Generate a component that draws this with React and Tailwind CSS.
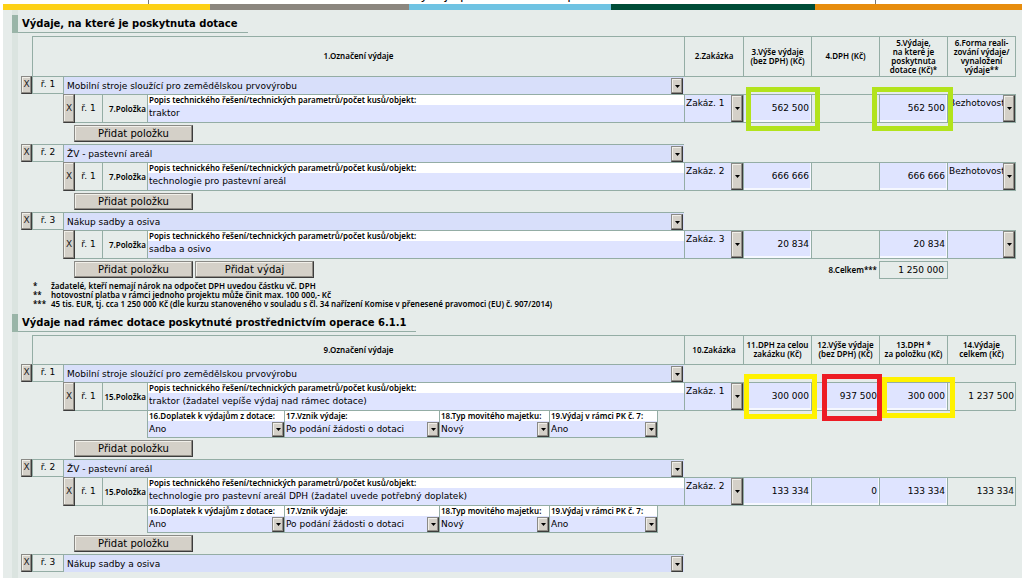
import { useId } from "react";

const line = "border-[#94ada5]";
const body = "font-['DejaVu_Sans',sans-serif] text-[9px]";
const small = "font-['Noto_Sans',sans-serif] text-[8px] font-semibold";
const bevel =
  "border border-t-[#8a8a86] border-l-[#8a8a86] border-r-[#3c3c3c] border-b-[#3c3c3c] bg-[#d4d0c8] shadow-[inset_-1px_-1px_0_#918d86,inset_1px_1px_0_#f1efe9]";

const grants = [
  { name: "Mobilní stroje sloužící pro zemědělskou prvovýrobu", item: "traktor", amount: "562 500", form: "Bezhotovostní", mark: true },
  { name: "ŽV - pastevní areál", item: "technologie pro pastevní areál", amount: "666 666", form: "Bezhotovostní" },
  { name: "Nákup sadby a osiva", item: "sadba a osivo", amount: "20 834", form: "" },
];

const extras = [
  {
    name: "Mobilní stroje sloužící pro zemědělskou prvovýrobu",
    item: "traktor (žadatel vepíše výdaj nad rámec dotace)",
    vat: "300 000", net: "937 500", itemVat: "300 000", total: "1 237 500", mark: true,
  },
  {
    name: "ŽV - pastevní areál",
    item: "technologie pro pastevní areál DPH (žadatel uvede potřebný doplatek)",
    vat: "133 334", net: "0", itemVat: "133 334", total: "133 334",
  },
];

const details = [
  { label: "16.Doplatek k výdajům z dotace:", value: "Ano", width: "w-[137px]" },
  { label: "17.Vznik výdaje:", value: "Po podání žádosti o dotaci", width: "w-[155px]" },
  { label: "18.Typ movitého majetku:", value: "Nový", width: "w-[110px]" },
  { label: "19.Výdaj v rámci PK č. 7:", value: "Ano", width: "w-[108px]" },
];

function Arrow() {
  return (
    <span aria-hidden="true" className={`flex w-3 shrink-0 items-center justify-center ${bevel}`}>
      <svg width="5" height="3" viewBox="0 0 5 3"><path d="M0 0h5L2.5 3z" fill="#000" /></svg>
    </span>
  );
}

function Choice({ id, label, value, className = "" }) {
  return (
    <select
      id={id}
      aria-label={id ? undefined : label}
      defaultValue={value}
      className={`block w-full min-w-0 flex-1 appearance-none overflow-hidden bg-transparent text-black outline-none ${body} ${className}`}
    >
      <option value={value}>{value}</option>
    </select>
  );
}

function RemoveButton({ label }) {
  return (
    <button type="button" aria-label={label} className={`flex h-full w-full items-center justify-center text-[#222] ${bevel} ${body}`}>
      X
    </button>
  );
}

function AddButton({ children }) {
  return (
    <button
      type="button"
      className={`h-[17px] w-[119px] font-['DejaVu_Sans',sans-serif] text-[10px] leading-[14px] font-medium text-black ${bevel}`}
    >
      {children}
    </button>
  );
}

function Columns() {
  return (
    <colgroup>
      <col className="w-[11px]" />
      <col className="w-[31px]" />
      <col className="w-[12px]" />
      <col className="w-[27px]" />
      <col className="w-[45px]" />
      <col />
      <col className="w-[59px]" />
      <col className="w-[68px]" />
      <col className="w-[68px]" />
      <col className="w-[68px]" />
      <col className="w-[69px]" />
    </colgroup>
  );
}

function HeaderRow({ titles, height }) {
  return (
    <thead>
      <tr className={height}>
        <td></td>
        {titles.map((lines, i) => (
          <th
            key={i}
            scope="col"
            colSpan={i === 0 ? 5 : 1}
            className={`border-t border-l p-0 pb-0.5 text-center align-middle leading-[9px] whitespace-nowrap last:border-r ${line} ${small}`}
          >
            {lines.map((text) => (
              <span key={text} className="block">{text}</span>
            ))}
          </th>
        ))}
      </tr>
    </thead>
  );
}

function ExpenseRow({ index, name }) {
  return (
    <tr className="h-[18px]">
      <td className="h-[18px] p-0"><RemoveButton label={`Odebrat výdaj ${index}`} /></td>
      <td className={`border-t border-b border-l p-0 text-center ${line} ${body}`}>ř. {index}</td>
      <td colSpan={4} className={`border-t border-l bg-[#d8dffa] p-0 ${line}`}>
        <div className="flex h-[17px] pt-px pr-px">
          <Choice label={`Označení výdaje ${index}`} value={name} className="pt-0.5 pl-[3px]" />
          <Arrow />
        </div>
      </td>
      <td colSpan={5} className={index === 1 ? `border-t p-0 ${line}` : "p-0"}></td>
    </tr>
  );
}

function Amount({ label, value, mark }) {
  return (
    <td className={`relative border-t border-b border-l p-0 ${line}`}>
      <input
        aria-label={label}
        defaultValue={value}
        className={`block h-[27px] w-full border-r border-b-2 border-[#f6f8ff] bg-[#dfe4ff] pr-px text-right text-black outline-none ${body}`}
      />
      {mark && <span aria-hidden="true" className={`pointer-events-none absolute z-10 border-[5px] ${mark}`}></span>}
    </td>
  );
}

function Plain({ value }) {
  return (
    <td className={`border-t border-b border-l p-0 pr-px text-right last:border-r ${line} ${body}`}>{value}</td>
  );
}

function ItemCells({ prefix, order, item }) {
  const id = useId();
  return (
    <>
      <td colSpan={2} className="p-0"></td>
      <td className="h-[29px] p-0"><RemoveButton label="Odebrat položku" /></td>
      <td className={`border-t border-b p-0 text-center ${line} ${body}`}>ř. 1</td>
      <td className={`border-t border-b border-l p-0 pr-px text-right whitespace-nowrap ${line} ${small}`}>
        {prefix}.Položka
      </td>
      <td className={`border-t border-b border-l bg-[#dfe4ff] p-0 ${line}`}>
        <label htmlFor={id} className={`block h-[10px] bg-white pl-px leading-[10px] ${small}`}>
          Popis technického řešení/technických parametrů/počet kusů/objekt:
        </label>
        <input id={id} defaultValue={item} className={`block h-[17px] w-full bg-transparent pb-0.5 pl-px text-black outline-none ${body}`} />
      </td>
      <td className={`border-t border-b border-l bg-[#dfe4ff] p-0 ${line}`}>
        <div className="flex h-[27px]">
          <Choice label="Zakázka" value={`Zakáz. ${order}`} className="h-[17px] pl-px" />
          <Arrow />
        </div>
      </td>
    </>
  );
}

function ButtonRow({ children, after }) {
  return (
    <tr className="h-[21px]">
      <td colSpan={2} className="p-0"></td>
      <td colSpan={4} className="p-0 pl-[11px] align-middle">
        <div className="flex gap-0.5">{children}</div>
      </td>
      {after || <td colSpan={5} className="p-0"></td>}
    </tr>
  );
}

function Detail({ label, value, width }) {
  const id = useId();
  return (
    <div className={`border-r border-b bg-[#dfe4ff] ${line} ${width}`}>
      <label htmlFor={id} className={`block h-[10px] bg-white pl-px leading-[10px] whitespace-nowrap ${small}`}>{label}</label>
      <div className="flex h-4 pt-px">
        <Choice id={id} value={value} className="pl-px" />
        <Arrow />
      </div>
    </div>
  );
}

function SectionTitle({ children }) {
  return (
    <div className="-ml-1.5 flex border-l-[6px] border-[#9ab5a8]">
      <h2 className="h-[18px] border-b border-[#94ada5] pr-[10px] pl-1 font-['DejaVu_Sans',sans-serif] text-[10px] leading-[18px] font-bold">
        {children}
      </h2>
    </div>
  );
}

export default function App() {
  const tableClass = "w-full table-fixed border-separate border-spacing-0";
  return (
    <div className="min-h-screen bg-white pr-0.5 pl-[3px] text-black">
      <div className="flex h-1 overflow-hidden font-['DejaVu_Sans',sans-serif] text-[13px] leading-[18px]">
        <div className="w-[146px] border-r border-[#777]"></div>
        <div className="flex flex-1 items-end justify-center">Výdaje podle zadání a operace</div>
        <div className="w-[147px] border-l border-[#777]"></div>
      </div>
      <div className="flex h-1.5">
        <div className="flex-[207] bg-[#fdd116]"></div>
        <div className="flex-[199] bg-[#8c877f]"></div>
        <div className="flex-[202] bg-[#6fc3e3]"></div>
        <div className="flex-[204] bg-[#004d38]"></div>
        <div className="flex-[207] bg-[#e78d0e]"></div>
      </div>
      <main className="min-h-[568px] bg-[#e6ecea] pl-[9px]">
        <form className="min-h-[568px] border-l-[6px] border-[#dbe4e0] pt-[5px]">
          <SectionTitle>Výdaje, na které je poskytnuta dotace</SectionTitle>
          <div className="mt-[3px] pr-1.5 pl-[3px]">
            <table className={tableClass}>
              <Columns />
              <HeaderRow
                height="h-[40px]"
                titles={[
                  ["1.Označení výdaje"],
                  ["2.Zakázka"],
                  ["3.Výše výdaje", "(bez DPH) (Kč)"],
                  ["4.DPH (Kč)"],
                  ["5.Výdaje,", "na které je", "poskytnuta", "dotace (Kč)*"],
                  ["6.Forma reali-", "zování výdaje/", "vynaložení", "výdaje**"],
                ]}
              />
              {grants.map((g, i) => (
                <tbody key={g.name}>
                  <ExpenseRow index={i + 1} name={g.name} />
                  <tr>
                    <ItemCells prefix="7" order={i + 1} item={g.item} />
                    <Amount
                      label="Výše výdaje (bez DPH)"
                      value={g.amount}
                      mark={g.mark && "-top-2 -right-[9px] -bottom-[9px] left-[2px] border-[#b2e31c]"}
                    />
                    <Plain />
                    <Amount
                      label="Výdaje, na které je poskytnuta dotace"
                      value={g.amount}
                      mark={g.mark && "-top-2 -right-[6px] -bottom-[9px] -left-2 border-[#b2e31c]"}
                    />
                    <td className={`border border-r bg-[#dfe4ff] p-0 ${line}`}>
                      <div className="flex h-[27px]">
                        <Choice label="Forma realizování výdaje" value={g.form} className="h-[17px] pl-px" />
                        <Arrow />
                      </div>
                    </td>
                  </tr>
                  {i < 2 ? (
                    <ButtonRow><AddButton>Přidat položku</AddButton></ButtonRow>
                  ) : (
                    <ButtonRow
                      after={
                        <>
                          <td colSpan={3} className={`p-0 pr-0.5 text-right font-bold ${small}`}>8.Celkem***</td>
                          <td className="p-0">
                            <output className={`-mr-px block h-[18px] border pr-[3px] text-right leading-[16px] ${line} ${body}`}>1 250 000</output>
                          </td>
                          <td className="p-0"></td>
                        </>
                      }
                    >
                      <AddButton>Přidat položku</AddButton>
                      <AddButton>Přidat výdaj</AddButton>
                    </ButtonRow>
                  )}
                </tbody>
              ))}
            </table>
            <div className={`grid grid-cols-[18px_1fr] pt-px pb-1.5 pl-3 leading-[9px] ${small}`}>
              <span>*</span>
              <span>žadatelé, kteří nemají nárok na odpočet DPH uvedou částku vč. DPH</span>
              <span>**</span>
              <span>hotovostní platba v rámci jednoho projektu může činit max. 100 000,- Kč</span>
              <span>***</span>
              <span>45 tis. EUR, tj. cca 1 250 000 Kč (dle kurzu stanoveného v souladu s čl. 34 nařízení Komise v přenesené pravomoci (EU) č. 907/2014)</span>
            </div>
          </div>
          <SectionTitle>Výdaje nad rámec dotace poskytnuté prostřednictvím operace 6.1.1</SectionTitle>
          <div className="mt-[3px] pr-1.5 pl-[3px]">
            <table className={tableClass}>
              <Columns />
              <HeaderRow
                height="h-[29px]"
                titles={[
                  ["9.Označení výdaje"],
                  ["10.Zakázka"],
                  ["11.DPH za celou", "zakázku (Kč)"],
                  ["12.Výše výdaje", "(bez DPH) (Kč)"],
                  ["13.DPH *", "za položku (Kč)"],
                  ["14.Výdaje", "celkem (Kč)"],
                ]}
              />
              {extras.map((x, i) => (
                <tbody key={x.name}>
                  <ExpenseRow index={i + 1} name={x.name} />
                  <tr>
                    <ItemCells prefix="15" order={i + 1} item={x.item} />
                    <Amount label="DPH za celou zakázku" value={x.vat} mark={x.mark && "-top-[9px] -right-[6px] -bottom-[9px] left-0 border-[#fff200]"} />
                    <Amount label="Výše výdaje (bez DPH)" value={x.net} mark={x.mark && "-top-[9px] -right-[3px] -bottom-[11px] left-[10px] border-[#ed1c24]"} />
                    <Amount label="DPH za položku" value={x.itemVat} mark={x.mark && "-top-1.5 -right-2 -bottom-2 left-0.5 border-[#fff200]"} />
                    <Plain value={x.total} />
                  </tr>
                  <tr className="h-[26px]">
                    <td colSpan={5} className="p-0"></td>
                    <td colSpan={6} className={`border-l p-0 ${line}`}>
                      <div className="flex">
                        {details.map((d) => <Detail key={d.label} {...d} />)}
                      </div>
                    </td>
                  </tr>
                  <ButtonRow><AddButton>Přidat položku</AddButton></ButtonRow>
                </tbody>
              ))}
              <tbody>
                <ExpenseRow index={3} name="Nákup sadby a osiva" />
              </tbody>
            </table>
          </div>
        </form>
      </main>
    </div>
  );
}
